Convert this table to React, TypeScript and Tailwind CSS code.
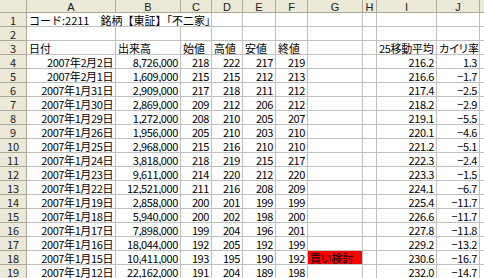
import React from 'react';

type Row = {
  date: string;
  vol: string;
  open: string;
  high: string;
  low: string;
  close: string;
  note?: string;
  ma: string;
  dev: string;
};

const rows: Row[] = [
  { date: '2007年2月2日', vol: '8,726,000', open: '218', high: '222', low: '217', close: '219', ma: '216.2', dev: '1.3' },
  { date: '2007年2月1日', vol: '1,609,000', open: '215', high: '215', low: '212', close: '213', ma: '216.6', dev: '−1.7' },
  { date: '2007年1月31日', vol: '2,909,000', open: '217', high: '218', low: '211', close: '212', ma: '217.4', dev: '−2.5' },
  { date: '2007年1月30日', vol: '2,869,000', open: '209', high: '212', low: '206', close: '212', ma: '218.2', dev: '−2.9' },
  { date: '2007年1月29日', vol: '1,272,000', open: '208', high: '210', low: '205', close: '207', ma: '219.1', dev: '−5.5' },
  { date: '2007年1月26日', vol: '1,956,000', open: '205', high: '210', low: '203', close: '210', ma: '220.1', dev: '−4.6' },
  { date: '2007年1月25日', vol: '2,968,000', open: '215', high: '216', low: '210', close: '210', ma: '221.2', dev: '−5.1' },
  { date: '2007年1月24日', vol: '3,818,000', open: '218', high: '219', low: '215', close: '217', ma: '222.3', dev: '−2.4' },
  { date: '2007年1月23日', vol: '9,611,000', open: '214', high: '220', low: '212', close: '220', ma: '223.3', dev: '−1.5' },
  { date: '2007年1月22日', vol: '12,521,000', open: '211', high: '216', low: '208', close: '209', ma: '224.1', dev: '−6.7' },
  { date: '2007年1月19日', vol: '2,858,000', open: '200', high: '201', low: '199', close: '199', ma: '225.4', dev: '−11.7' },
  { date: '2007年1月18日', vol: '5,940,000', open: '200', high: '202', low: '198', close: '200', ma: '226.6', dev: '−11.7' },
  { date: '2007年1月17日', vol: '7,898,000', open: '199', high: '204', low: '196', close: '201', ma: '227.8', dev: '−11.8' },
  { date: '2007年1月16日', vol: '18,044,000', open: '192', high: '205', low: '192', close: '199', ma: '229.2', dev: '−13.2' },
  { date: '2007年1月15日', vol: '10,411,000', open: '193', high: '195', low: '190', close: '192', note: '買い検討', ma: '230.6', dev: '−16.7' },
  { date: '2007年1月12日', vol: '22,162,000', open: '191', high: '204', low: '189', close: '198', ma: '232.0', dev: '−14.7' },
];

const letters = ['A', 'B', 'C', 'D', 'E', 'F', 'G', 'H', 'I', 'J', ''];

const hdr = "h-[13px] bg-[#ece9d8] border-r border-b border-[#aca899] text-center text-[11px] leading-[14px] text-[#222] font-['Liberation_Sans',sans-serif] overflow-hidden";
const rowHdr = 'h-[14px] bg-[#ece9d8] border-r border-b border-[#aca899] text-center text-[11px] leading-[14px] text-[#222] overflow-hidden';
const cell = 'h-[14px] border-r border-b border-[#c0c0c0] px-[2px] text-[11px] leading-[14px] whitespace-nowrap overflow-hidden';
const num = `${cell} text-right tracking-[-0.4px]`;
const plain = '[font-feature-settings:normal]';

function RowNum({ n }: { n: number }) {
  return <div className={rowHdr}>{n}</div>;
}

export default function App() {
  return (
    <div className="w-[484px] h-[278px] overflow-hidden bg-white text-black font-['Noto_Sans_CJK_JP',sans-serif] [font-feature-settings:'palt']">
      <div className="grid w-[520px] grid-cols-[27px_89px_65px_31px_31px_33px_32px_55px_14px_60px_43px_40px] grid-rows-[13px_repeat(19,14px)]">
        <div className={hdr} />
        {letters.map((l, i) => (
          <div key={i} className={hdr}>{l}</div>
        ))}

        <RowNum n={1} />
        <div className={`${cell} col-span-3`}>
          <span className={plain}>コード</span>:2211<span className={plain}>　銘柄【東証】</span>「不二家」
        </div>
        {Array.from({ length: 8 }).map((_, i) => (
          <div key={i} className={cell} />
        ))}

        <RowNum n={2} />
        {Array.from({ length: 11 }).map((_, i) => (
          <div key={i} className={cell} />
        ))}

        <RowNum n={3} />
        <div className={cell}>日付</div>
        <div className={cell}>出来高</div>
        <div className={cell}>始値</div>
        <div className={cell}>高値</div>
        <div className={cell}>安値</div>
        <div className={cell}>終値</div>
        <div className={cell} />
        <div className={cell} />
        <div className={`${cell} tracking-[-0.3px]`}>25移動平均</div>
        <div className={cell}>カイリ率</div>
        <div className={cell} />

        {rows.map((r, i) => (
          <React.Fragment key={r.date}>
            <RowNum n={i + 4} />
            <div className={num}>{r.date}</div>
            <div className={num}>{r.vol}</div>
            <div className={num}>{r.open}</div>
            <div className={num}>{r.high}</div>
            <div className={num}>{r.low}</div>
            <div className={num}>{r.close}</div>
            {r.note ? (
              <div className={`${cell} bg-[#ff0000]`}>{r.note}</div>
            ) : (
              <div className={cell} />
            )}
            <div className={cell} />
            <div className={num}>{r.ma}</div>
            <div className={num}>{r.dev}</div>
            <div className={cell} />
          </React.Fragment>
        ))}
      </div>
    </div>
  );
}
